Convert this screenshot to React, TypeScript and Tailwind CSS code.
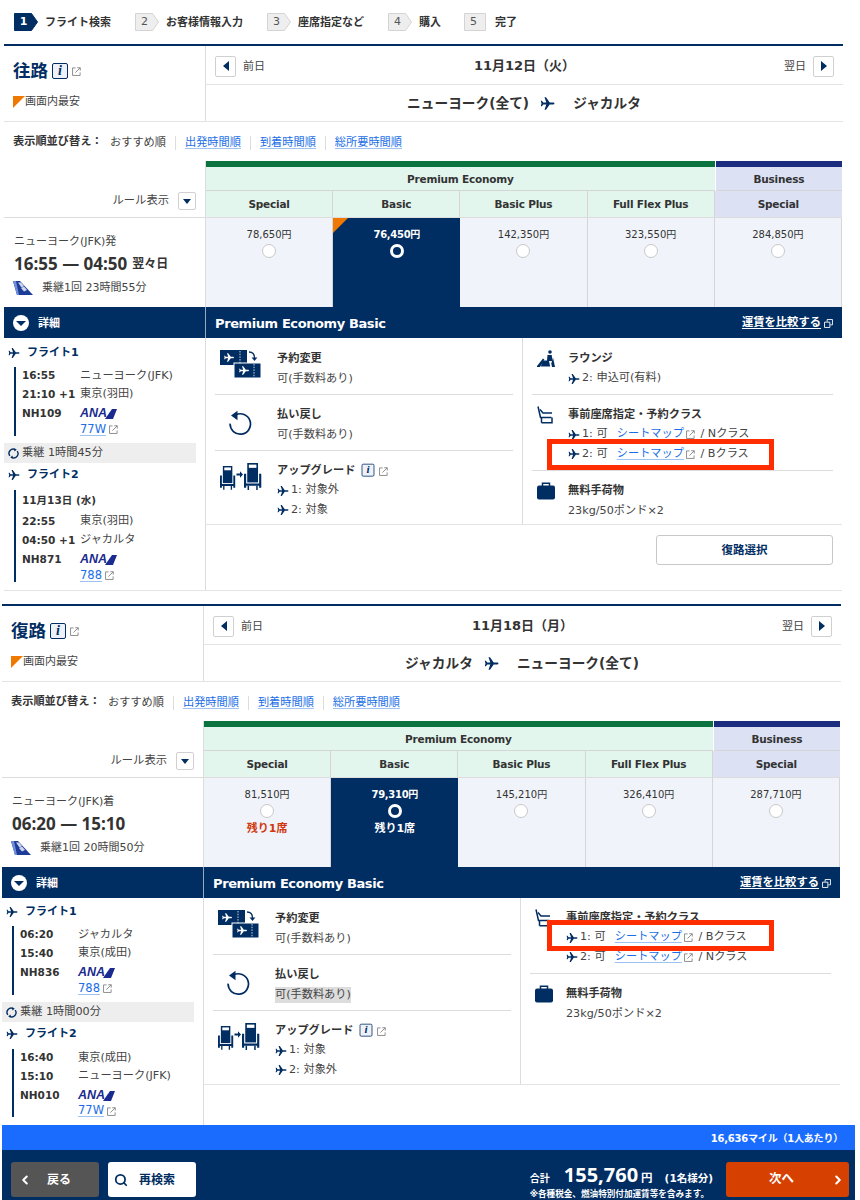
import React from "react";
import { ChevronLeft, ChevronRight, Search } from "lucide-react";

const NAVY = "#002d62";

function Plane({ className = "w-[12px] h-[12px]" }: { className?: string }) {
  return (
    <svg viewBox="0 0 24 24" className={`${className} shrink-0`} fill={NAVY}>
      <path d="M23 12c0-.9-.8-1.5-1.7-1.5H15.5L9.6 2H7.2l2.9 8.5H5.2L3 7.6H1.2L2.4 12l-1.2 4.4H3l2.2-2.9h4.9L7.2 22h2.4l5.9-8.5h5.8c.9 0 1.7-.6 1.7-1.5z" />
    </svg>
  );
}

function Ext({ className = "" }: { className?: string }) {
  return (
    <svg viewBox="0 0 10 10" className={`inline-block w-[9px] h-[9px] ${className}`} fill="none" stroke="#777" strokeWidth="0.9">
      <path d="M4 1H.6v8.4H9V6" />
      <path d="M3.8 6.2 9 1M5.8 .8H9.2V4" />
    </svg>
  );
}

function Info() {
  return (
    <span className="inline-flex items-center justify-center w-[16px] h-[16px] border border-[#002d62] rounded-[2px] bg-[#eef2f8] text-[#002d62] text-[14px] leading-none font-bold italic [font-family:'Liberation_Serif',serif]">
      i
    </span>
  );
}

function AnaLogo() {
  return (
    <span className="flex items-center h-[10px] text-[#1b2a8f]">
      <span className="text-[12.5px] leading-none font-bold italic [font-family:'Liberation_Sans',sans-serif]">ANA</span>
      <svg viewBox="0 0 12 10" className="w-[12px] h-[10px] -ml-[2px]">
        <path d="M0 10 7 0h5L8 10z" fill="#1b2a8f" />
      </svg>
    </span>
  );
}

function AnaTail() {
  return (
    <svg viewBox="0 0 20 14" className="w-[20px] h-[14px] shrink-0">
      <path d="M0 0h7l13 14H4z" fill="#1d3c9a" />
      <path d="M5 1.5h3l3 3.5-2.5 1.5z" fill="#cdd6ee" />
      <path d="M8 7l3-1.5 3 3.5-3 1.5z" fill="#cdd6ee" />
      <path d="M0 0h3L6 14H4z" fill="#6f8fd8" />
    </svg>
  );
}

function TicketIcon() {
  return (
    <svg viewBox="0 0 42 28" className="w-[42px] h-[28px]">
      <rect x="0" y="0" width="27" height="15" fill={NAVY} />
      <rect x="14" y="13" width="27" height="15" fill={NAVY} stroke="#fff" strokeWidth="1" />
      <path d="M20 1v13M34 14v13" stroke="#fff" strokeWidth="0.8" strokeDasharray="1.5 1.2" />
      <g fill="#fff">
        <path d="M14 7.5c0-.4-.4-.7-.8-.7h-2.4L8.2 3.3H7l1.2 3.5H5.8L4.9 5.7h-.8l.5 1.8-.5 1.8h.8l.9-1.1h2.4L7 11.7h1.2l2.6-3.5h2.4c.4 0 .8-.3.8-.7z" />
        <path d="M29 20.5c0-.4-.4-.7-.8-.7h-2.4l-2.6-3.5H22l1.2 3.5h-2.4l-.9-1.1h-.8l.5 1.8-.5 1.8h.8l.9-1.1h2.4L22 24.7h1.2l2.6-3.5h2.4c.4 0 .8-.3.8-.7z" />
      </g>
      <path d="M29 2c3.5 0 5.5 2 5.5 6" fill="none" stroke={NAVY} strokeWidth="1.3" />
      <path d="M31.6 7.5h5.8l-2.9 3.6z" fill={NAVY} />
    </svg>
  );
}

function RefundIcon() {
  return (
    <svg viewBox="0 0 26 26" className="w-[26px] h-[26px]">
      <path d="M8 6.5a10.2 10.2 0 1 1-5.4 8.6" fill="none" stroke={NAVY} strokeWidth="1.7" transform="translate(1.5 -1.5)" />
      <path d="M11.5 .8v9.4L5 5.4z" fill={NAVY} />
    </svg>
  );
}

function SeatShape({ x, y, s }: { x: number; y: number; s: number }) {
  return (
    <g transform={`translate(${x} ${y}) scale(${s})`}>
      <path d="M3 0h10v18H3z" fill={NAVY} />
      <rect x="4.5" y="1.5" width="7" height="3" fill="#fff" />
      <path d="M0 10h2v13H0zM14 10h2v13h-2zM1 19h14v2H1z" fill={NAVY} />
      <path d="M4 21v4M12 21v4" stroke={NAVY} strokeWidth="1.4" />
    </g>
  );
}

function UpgradeIcon() {
  return (
    <svg viewBox="0 0 42 27" className="w-[42px] h-[27px]">
      <SeatShape x={0} y={3} s={0.95} />
      <SeatShape x={24} y={0} s={1.08} />
      <path d="M16.5 10.5h3.5V8.3l3 3.2-3 3.2v-2.2h-3.5z" fill={NAVY} />
    </svg>
  );
}

function LoungeIcon() {
  return (
    <svg viewBox="0 0 18 18" className="w-[18px] h-[18px]">
      <circle cx="13" cy="2" r="1.8" fill={NAVY} />
      <path d="M10.5 5h4.2l.8 6H12l1.2 5.5H4l1-6h5z" fill={NAVY} />
      <path d="M16 7.5 18 17h-3l-.7-3.5z" fill={NAVY} />
      <path d="M0 16 6 8.5l1.3 1L3 17H0z" fill={NAVY} />
    </svg>
  );
}

function SeatOutlineIcon() {
  return (
    <svg viewBox="0 0 16 18" className="w-[16px] h-[18px]" fill="none" stroke={NAVY} strokeWidth="1.5">
      <path d="M1 0.5 3.5 11.5h11" />
      <path d="M3 3.5 6 7h9M4.5 16.8h10.5V11.5M4.5 11.5v5.3" />
    </svg>
  );
}

function BagIcon() {
  return (
    <svg viewBox="0 0 18 18" className="w-[18px] h-[18px]">
      <rect x="0" y="3.5" width="18" height="14" rx="2" fill={NAVY} />
      <path d="M5.5 4V1.2h7V4" fill="none" stroke={NAVY} strokeWidth="1.5" />
    </svg>
  );
}

function Step({ n, label, active, w }: { n: string; label: string; active?: boolean; w: string }) {
  return (
    <div className={`flex items-center gap-[7px] ${w}`}>
      <div className="relative w-[24px] h-[18px] flex items-center justify-center shrink-0">
        <svg viewBox="0 0 24 18" className="absolute inset-0 w-[24px] h-[18px]">
          <path
            d={n === "5" ? "M.5.5h21v17H.5z" : "M.5.5h17l6 8.5-6 8.5H.5z"}
            fill={active ? NAVY : "#eeeeee"}
            stroke={active ? NAVY : "#d4d4d4"}
          />
        </svg>
        <span className={`relative pr-[5px] text-[11px] ${active ? "text-white font-bold" : "text-[#555]"}`}>{n}</span>
      </div>
      <span className="pt-[2px] text-[11px] font-bold text-[#333]">{label}</span>
    </div>
  );
}

function Radio({ on }: { on?: boolean }) {
  return on ? (
    <span className="block w-[14px] h-[14px] rounded-full border-[3.5px] border-white bg-[#002d62]" />
  ) : (
    <span className="block w-[14px] h-[14px] rounded-full border border-[#c8c8c8] bg-white" />
  );
}

type Fare = { price: string; on?: boolean; tri?: boolean; left?: boolean };

function FareCell({ price, on, tri, left }: Fare) {
  return (
    <div className={`relative flex flex-col items-center pt-[10px] ${on ? "bg-[#002d62] text-white" : "bg-[#f0f3f9] text-[#333] border-r border-[#d5d5d5]"}`}>
      {tri && (
        <svg viewBox="0 0 15 15" className="absolute left-0 top-0 w-[15px] h-[15px]">
          <path d="M0 0h15L0 15z" fill="#ee7800" />
        </svg>
      )}
      <div className={`h-[14px] leading-[14px] ${on ? "font-bold text-[10px] tracking-[-0.3px]" : "text-[10px]"}`}>{price}</div>
      <div className="mt-[2px]"><Radio on={on} /></div>
      {left && <div className={`mt-[3px] text-[11px] font-bold ${on ? "text-white" : "text-[#d0380f]"}`}>残り1席</div>}
    </div>
  );
}

function Link({ children }: { children: React.ReactNode }) {
  return <span className="text-[#1a6ee6] underline decoration-[#9fc3f0] underline-offset-2">{children}</span>;
}

function PlaneLine({ children }: { children: React.ReactNode }) {
  return (
    <div className="flex items-center gap-[2px] h-[19.5px] whitespace-pre text-[11.2px] text-[#444]">
      <Plane />
      {children}
    </div>
  );
}

function InfoRow({ icon, title, children, cls }: { icon: React.ReactNode; title: React.ReactNode; children: React.ReactNode; cls: string }) {
  return <div className={cls}><RowInner icon={icon} title={title}>{children}</RowInner></div>;
}

function RowInner({ icon, title, children }: { icon: React.ReactNode; title: React.ReactNode; children: React.ReactNode }) {
  return (
    <>
      <div className="shrink-0">{icon}</div>
      <div className="min-w-0">
        <div className="flex items-center gap-[3px] h-[20px] text-[11.2px] font-bold text-[#333]">{title}</div>
        <div>{children}</div>
      </div>
    </>
  );
}

const Sub = ({ children, cls = "" }: { children: React.ReactNode; cls?: string }) => (
  <div className="h-[20px] flex items-center"><span className={`text-[11.2px] text-[#444] ${cls}`}>{children}</span></div>
);

function FlightRow({ a, b, h, logo, link }: { a: string; b?: string; h: string; logo?: boolean; link?: string }) {
  return (
    <div className={`flex items-center ${h}`}>
      <span className="w-[58px] shrink-0 text-[10.5px] font-bold text-[#333] whitespace-pre">{a}</span>
      {b && <span className="text-[11.2px] text-[#444] whitespace-pre">{b}</span>}
      {logo && <AnaLogo />}
      {link && <span className="text-[11.5px] flex items-center gap-[3px]"><Link>{link}</Link><Ext /></span>}
    </div>
  );
}

const FlightHead = ({ label }: { label: string }) => (
  <div className="flex items-center gap-[7px] h-[14px] pl-[4px] text-[11px] font-bold text-[#002d62]">
    <Plane />
    {label}
  </div>
);

type Sec = {
  dir: string; day: string; from: string; to: string; cls: string;
  fares: Fare[]; origin: string; time: React.ReactNode; trip: string;
  detailH: string; headPad: string; left: React.ReactNode; colB: React.ReactNode; bottom: React.ReactNode;
  refundCls?: string; up1: string; up2: string;
};

function Section(p: Sec) {
  const colA = "flex mx-[9px] pl-[5px] gap-[15px] border-b border-[#dcdcdc]";
  const grid = "grid grid-cols-[repeat(5,127.2px)]";
  return (
    <section className={`relative ${p.cls}`}>
      <div className="border-t-[2px] border-t-[#002d62] w-[839px] flex border-b border-b-[#e4e4e4]">
        <div className="w-[202px] h-[75px] border-r border-[#dcdcdc] pl-[9px] pt-[14px] shrink-0">
          <div className="flex items-center gap-[3px] h-[22px]">
            <span className="text-[17.5px] font-bold text-[#002d62] mr-[1px]">{p.dir}</span>
            <Info />
            <Ext className="ml-[1px]" />
          </div>
          <div className="flex items-center mt-[13px] h-[14px]">
            <svg viewBox="0 0 12 12" className="w-[12px] h-[12px] shrink-0"><path d="M0 0h12L0 12z" fill="#ee7800" /></svg>
            <span className="text-[11px] text-[#444]">画面内最安</span>
          </div>
        </div>
        <div className="flex-1">
          <div className="h-[39px] border-b border-[#e4e4e4] flex items-center justify-between pl-[9px] pr-[9px] pt-[2px]">
            <div className="flex items-center gap-[7px] w-[100px]">
              <span className="w-[21px] h-[21px] border border-[#d0d0d0] rounded-[2px] flex items-center justify-center">
                <span className="border-y-[5px] border-y-transparent border-r-[6px] border-r-[#002d62]" />
              </span>
              <span className="text-[11px] text-[#444] pt-[2px]">前日</span>
            </div>
            <span className="text-[13px] font-bold text-[#333]">{p.day}</span>
            <div className="flex items-center justify-end gap-[7px] w-[100px]">
              <span className="text-[11px] text-[#444] pt-[2px]">翌日</span>
              <span className="w-[21px] h-[21px] border border-[#d0d0d0] rounded-[2px] flex items-center justify-center">
                <span className="border-y-[5px] border-y-transparent border-l-[6px] border-l-[#002d62]" />
              </span>
            </div>
          </div>
          <div className="h-[35px] flex items-center justify-center pr-[1px] pt-[1px] gap-[11px] text-[13.7px] font-bold text-[#333]">
            <span>{p.from}</span>
            <Plane className="w-[15px] h-[15px]" />
            <span className="ml-[7px]">{p.to}</span>
          </div>
        </div>
      </div>

      <div className="h-[39px] flex items-center pl-[9px] pt-[2px] text-[11.2px] text-[#444]">
        <span className="font-bold text-[#333] w-[97px]">表示順並び替え：</span>
        <span className="pr-[9px] border-r border-[#dcdcdc] leading-[14px]">おすすめ順</span>
        <span className="px-[9px] border-r border-[#dcdcdc] leading-[14px]"><Link>出発時間順</Link></span>
        <span className="px-[9px] border-r border-[#dcdcdc] leading-[14px]"><Link>到着時間順</Link></span>
        <span className="pl-[9px] leading-[14px]"><Link>総所要時間順</Link></span>
      </div>

      <div className="flex w-[838px] h-[57px] border-b border-[#dcdcdc]">
        <div className="w-[202px] shrink-0 border-r border-[#dcdcdc] flex items-end justify-end gap-[9px] pr-[9px] pb-[7px]">
          <span className="text-[11.3px] text-[#444] leading-[18px] pt-[1px]">ルール表示</span>
          <span className="w-[18px] h-[18px] border border-[#d0d0d0] rounded-[2px] flex items-center justify-center">
            <span className="border-x-[4.5px] border-x-transparent border-t-[5px] border-t-[#002d62]" />
          </span>
        </div>
        <div className={`${grid} grid-rows-[6px_24px_26px] text-[10.5px] tracking-[-0.2px] font-bold text-[#333]`}>
          <div className="col-span-4 bg-[#0a7340]" />
          <div className="bg-[#1c2d80] ml-px" />
          <div className="col-span-4 bg-[#e3f6ee] border-b border-[#d5d5d5] flex items-center justify-center pt-[2px]">Premium Economy</div>
          <div className="bg-[#dce1f4] border-b border-[#d5d5d5] ml-px flex items-center justify-center pt-[2px]">Business</div>
          {["Special", "Basic", "Basic Plus", "Full Flex Plus"].map((t) => (
            <div key={t} className="bg-[#e3f6ee] border-r border-[#d5d5d5] flex items-center justify-center pt-[2px]">{t}</div>
          ))}
          <div className="bg-[#dce1f4] flex items-center justify-center pt-[2px]">Special</div>
        </div>
      </div>

      <div className="flex w-[838px] h-[89px]">
        <div className="w-[202px] shrink-0 border-r border-[#dcdcdc] pl-[10px] pt-[17px]">
          <div className="text-[11px] text-[#444] h-[14px] leading-[14px]">{p.origin}</div>
          <div className="mt-[4px] h-[22px] flex items-center text-[17px] font-bold text-[#333] gap-[5px] [font-family:'Open_Sans','Noto_Sans_CJK_JP',sans-serif]">{p.time}</div>
          <div className="mt-[5px] -ml-px flex items-center gap-[9px] text-[11px] text-[#444]">
            <AnaTail />
            {p.trip}
          </div>
        </div>
        <div className={grid}>
          {p.fares.map((f) => <FareCell key={f.price} {...f} />)}
        </div>
      </div>

      <div className="flex w-[838px] h-[31px] bg-[#002d62] text-white">
        <div className="w-[201px] shrink-0 flex items-center pl-[9px] gap-[9px]">
          <span className="w-[16px] h-[16px] rounded-full bg-white flex items-center justify-center">
            <span className="border-x-[5px] border-x-transparent border-t-[5px] border-t-[#002d62] mt-[1px]" />
          </span>
          <span className="text-[11px] font-bold pt-[3px]">詳細</span>
        </div>
        <div className="flex-1 border-l border-[#9aa8bc] flex items-center justify-between pl-[9px] pr-[9px] pt-[2px]">
          <span className="text-[13px] tracking-[-0.4px] font-bold">Premium Economy Basic</span>
          <span className="flex items-center gap-[3px] text-[11.3px] font-bold">
            <span className="underline underline-offset-2">運賃を比較する</span>
            <svg viewBox="0 0 10 10" className="w-[9px] h-[9px]" fill="none" stroke="#fff" strokeWidth="1"><path d="M3.5 3V.6h5.9v5.9H7M.6 3.5h5.9v5.9H.6z" /></svg>
          </span>
        </div>
      </div>

      <div className={`flex w-[838px] ${p.detailH}`}>
        <div className={`w-[202px] shrink-0 border-r border-[#dcdcdc] ${p.headPad}`}>{p.left}</div>
        <div className="flex-1 flex flex-col">
          <div className="flex h-[187px] border-b border-[#e4e4e4]">
            <div className="w-[317px] shrink-0 border-r border-[#dcdcdc]">
              <InfoRow cls={`${colA} h-[57px] pt-[11px]`} icon={<div className="pt-[1px]"><TicketIcon /></div>} title="予約変更"><Sub>可(手数料あり)</Sub></InfoRow>
              <InfoRow cls={`${colA} h-[56px] pt-[10px]`} icon={<div className="pl-[6px] pt-[5px] w-[42px]"><RefundIcon /></div>} title="払い戻し"><Sub cls={p.refundCls}>可(手数料あり)</Sub></InfoRow>
              <div className="flex mx-[9px] pl-[5px] gap-[15px] pt-[10px]">
                <RowInner icon={<div className="pt-[2px]"><UpgradeIcon /></div>} title={<>アップグレード<span className="ml-[2px] scale-[0.8]"><Info /></span><Ext /></>}>
                  <PlaneLine>1: {p.up1}</PlaneLine>
                  <PlaneLine>2: {p.up2}</PlaneLine>
                </RowInner>
              </div>
            </div>
            <div className="flex-1">{p.colB}</div>
          </div>
          {p.bottom}
        </div>
      </div>
    </section>
  );
}

const colBCls = "flex mx-[9px] pl-[5px] gap-[13px]";

const bars = "border-l-[2px] border-[#002d62] ml-[10px] pl-[6px]";

const Transfer = ({ t, cls }: { t: string; cls: string }) => (
  <div className={`${cls} h-[20px] w-[192px] bg-[#eeeeee] flex items-center gap-[2px] pl-[4px] text-[11.2px] text-[#444]`}>
    <svg viewBox="0 0 12 12" className="w-[11px] h-[11px]" fill="none" stroke="#002d62" strokeWidth="1.5">
      <path d="M2 8.5A4.6 4.6 0 0 1 8 1.8M10 3.5A4.6 4.6 0 0 1 4 10.2" />
      <path d="M6.8.2 9.6 2 7 3.8zM5.2 8.2 2.4 10 5 11.8z" fill="#002d62" stroke="none" />
    </svg>
    <span className="pl-[1px]">{t}</span>
  </div>
);

const RedBox = ({ cls }: { cls: string }) => (
  <div className={`absolute w-[227px] h-[31px] border-[5px] border-[#ff2d00] ${cls}`} />
);

export default function App() {
  return (
    <div className="relative w-[860px] h-[1200px] overflow-hidden bg-white [font-family:'DejaVu_Sans','Noto_Sans_CJK_JP',sans-serif]">
      <div className="flex items-center h-[44px] pl-[14px]">
        <Step n="1" label="フライト検索" active w="w-[121px]" />
        <Step n="2" label="お客様情報入力" w="w-[132px]" />
        <Step n="3" label="座席指定など" w="w-[121px]" />
        <Step n="4" label="購入" w="w-[76px]" />
        <Step n="5" label="完了" w="w-[80px]" />
      </div>

      <Section
        cls="ml-[4px] mb-[13px]"
        dir="往路"
        day="11月12日（火）"
        from="ニューヨーク(全て)"
        to="ジャカルタ"
        fares={[
          { price: "78,650円" },
          { price: "76,450円", on: true, tri: true },
          { price: "142,350円" },
          { price: "323,550円" },
          { price: "284,850円" },
        ]}
        origin="ニューヨーク(JFK)発"
        time={<>16:55 — 04:50 <span className="text-[12px]">翌々日</span></>}
        trip="乗継1回 23時間55分"
        detailH="h-[253px] border-b border-[#e4e4e4]"
        headPad="pt-[8px]"
        up1="対象外"
        up2="対象"
        left={
          <>
            <FlightHead label="フライト1" />
            <div className={`${bars} mt-[7px] h-[69px]`}>
              <FlightRow a="16:55" b="ニューヨーク(JFK)" h="h-[18px]" />
              <FlightRow a="21:10 +1" b="東京(羽田)" h="h-[19px]" />
              <FlightRow a="NH109" logo h="h-[19px]" />
              <FlightRow a="" link="77W" h="h-[13px]" />
            </div>
            <Transfer t="乗継 1時間45分" cls="mt-[7px]" />
            <div className="mt-[5px]"><FlightHead label="フライト2" /></div>
            <div className={`${bars} mt-[8px] h-[92px]`}>
              <div className="h-[22px] flex items-center text-[10.5px] font-bold text-[#333]">11月13日 (水)</div>
              <FlightRow a="22:55" b="東京(羽田)" h="h-[19px]" />
              <FlightRow a="04:50 +1" b="ジャカルタ" h="h-[19px]" />
              <FlightRow a="NH871" logo h="h-[19px]" />
              <FlightRow a="" link="788" h="h-[13px]" />
            </div>
          </>
        }
        colB={
          <>
            <div className={`${colBCls} h-[57px] pt-[11px] border-b border-[#dcdcdc]`}>
              <RowInner icon={<div className="pt-[1px]"><LoungeIcon /></div>} title="ラウンジ"><PlaneLine>2: 申込可(有料)</PlaneLine></RowInner>
            </div>
            <div className={`${colBCls} h-[76px] pt-[10px] border-b border-[#dcdcdc]`}>
              <RowInner icon={<div className="pt-[1px] w-[18px]"><SeatOutlineIcon /></div>} title="事前座席指定・予約クラス">
                <PlaneLine>1: 可  <Link>シートマップ</Link> <Ext /> / Nクラス</PlaneLine>
                <PlaneLine>2: 可  <Link>シートマップ</Link> <Ext /> / Bクラス</PlaneLine>
              </RowInner>
            </div>
            <div className={`${colBCls} pt-[10px]`}>
              <RowInner icon={<div className="pt-[1px]"><BagIcon /></div>} title="無料手荷物"><Sub>23kg/50ポンド×2</Sub></RowInner>
            </div>
          </>
        }
        bottom={
          <div className="flex justify-end pt-[10px] pr-[9px]">
            <div className="w-[177px] h-[30px] border border-[#c8c8c8] rounded-[3px] flex items-center justify-center pt-[1px] text-[11.5px] font-bold text-[#002d62]">復路選択</div>
          </div>
        }
      />
      <RedBox cls="left-[547px] top-[439px]" />

      <Section
        cls="ml-[2px]"
        dir="復路"
        day="11月18日（月）"
        from="ジャカルタ"
        to="ニューヨーク(全て)"
        fares={[
          { price: "81,510円", left: true },
          { price: "79,310円", on: true, left: true },
          { price: "145,210円" },
          { price: "326,410円" },
          { price: "287,710円" },
        ]}
        origin="ニューヨーク(JFK)着"
        time={<>06:20 — 15:10</>}
        trip="乗継1回 20時間50分"
        detailH="h-[227px]"
        headPad="pt-[7px]"
        refundCls="bg-[#dddddd]"
        up1="対象"
        up2="対象外"
        left={
          <>
            <FlightHead label="フライト1" />
            <div className={`${bars} mt-[7px] h-[69px]`}>
              <FlightRow a="06:20" b="ジャカルタ" h="h-[18px]" />
              <FlightRow a="15:40" b="東京(成田)" h="h-[19px]" />
              <FlightRow a="NH836" logo h="h-[19px]" />
              <FlightRow a="" link="788" h="h-[13px]" />
            </div>
            <Transfer t="乗継 1時間00分" cls="mt-[7px]" />
            <div className="mt-[5px]"><FlightHead label="フライト2" /></div>
            <div className={`${bars} mt-[8px] h-[68px]`}>
              <FlightRow a="16:40" b="東京(成田)" h="h-[18px]" />
              <FlightRow a="15:10" b="ニューヨーク(JFK)" h="h-[19px]" />
              <FlightRow a="NH010" logo h="h-[19px]" />
              <FlightRow a="" link="77W" h="h-[12px]" />
            </div>
          </>
        }
        colB={
          <>
            <div className={`${colBCls} h-[76px] pt-[10px] border-b border-[#dcdcdc]`}>
              <RowInner icon={<div className="pt-[1px] w-[18px]"><SeatOutlineIcon /></div>} title="事前座席指定・予約クラス">
                <PlaneLine>1: 可  <Link>シートマップ</Link> <Ext /> / Bクラス</PlaneLine>
                <PlaneLine>2: 可  <Link>シートマップ</Link> <Ext /> / Nクラス</PlaneLine>
              </RowInner>
            </div>
            <div className={`${colBCls} pt-[10px]`}>
              <RowInner icon={<div className="pt-[1px]"><BagIcon /></div>} title="無料手荷物"><Sub>23kg/50ポンド×2</Sub></RowInner>
            </div>
          </>
        }
        bottom={null}
      />
      <RedBox cls="left-[547px] top-[920px]" />

      <div className="ml-[2px] w-[853px]">
        <div className="h-[25px] bg-[#1a6cff] flex items-center justify-end pr-[12px] pt-[1px] text-[10px] tracking-[-0.2px] font-bold text-white">16,636マイル（1人あたり）</div>
        <div className="h-[50px] bg-[#002d62] flex items-start pt-[12px] pl-[9px] pr-[6px] text-white">
          <div className="w-[88px] h-[35px] rounded-[3px] bg-[#555555] flex items-center pl-[7px] gap-[15px] text-[12px] font-bold">
            <ChevronLeft size={14} strokeWidth={3.5} />
            戻る
          </div>
          <div className="ml-[9px] w-[88px] h-[35px] rounded-[3px] bg-white flex items-center pl-[6px] gap-[11px] text-[12px] font-bold text-[#002d62]">
            <Search size={14} strokeWidth={3} />
            再検索
          </div>
          <div className="ml-auto mr-[13px] flex flex-col items-end -mt-[2px]">
            <div className="flex items-baseline h-[28px]">
              <span className="text-[10px] font-bold mr-[14px]">合計</span>
              <span className="text-[20px] font-bold [font-family:'Open_Sans',sans-serif]">155,760</span>
              <span className="text-[11.5px] font-bold ml-[3px] mr-[12px]">円</span>
              <span className="text-[10.5px] font-bold">(1名様分)</span>
            </div>
            <div className="text-[8.6px] font-bold leading-[12px] pr-[4px]">※各種税金、燃油特別付加運賃等を含みます。</div>
          </div>
          <div className="w-[123px] h-[35px] rounded-[3px] bg-[#d64000] flex items-center justify-end pr-[4px] gap-[37px] text-[12.5px] font-bold">
            次へ
            <ChevronRight size={14} strokeWidth={3.5} />
          </div>
        </div>
      </div>
    </div>
  );
}
